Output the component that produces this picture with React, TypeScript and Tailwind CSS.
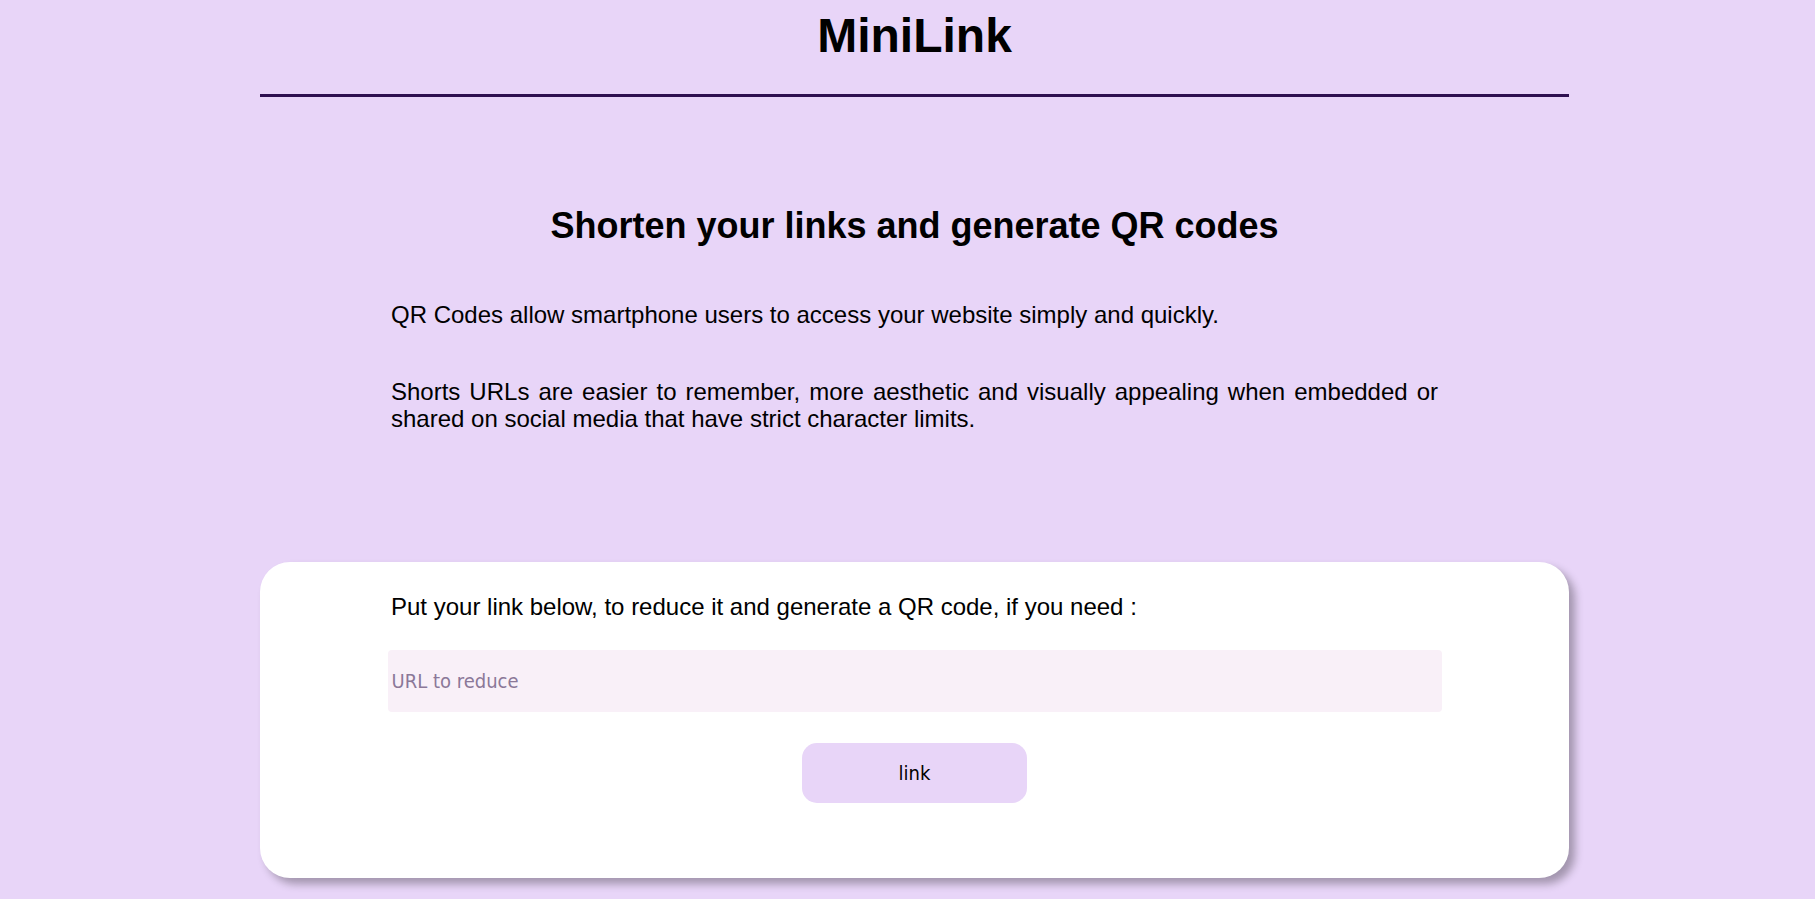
import React from "react";

export default function App() {
  return (
    <div className="min-h-screen bg-[#e8d5f8] font-['Liberation_Sans',Arial,sans-serif] text-black">
      <div className="ml-[260px] w-[1309px] pb-[20px]">
        <h1 className="pt-[8px] text-center text-[48px] leading-[56px] font-bold">MiniLink</h1>
        <div className="mt-[30px] h-[3px] bg-[#2e1050]" />
        <h2 className="mt-[108px] text-center text-[36px] leading-[42px] font-bold">
          Shorten your links and generate QR codes
        </h2>
        <div className="px-[131px] text-[24px] leading-[27.6px] text-justify">
          <p className="mt-[54px]">QR Codes allow smartphone users to access your website simply and quickly.</p>
          <p className="mt-[49px]">
            Shorts URLs are easier to remember, more aesthetic and visually appealing when embedded or shared on
            social media that have strict character limits.
          </p>
        </div>
        <div className="mt-[129px] rounded-[30px] bg-white pt-[31px] pb-[75px] shadow-[6px_6px_8px_rgba(0,0,0,0.3)]">
          <p className="px-[131px] text-[24px] leading-[27.6px]">
            Put your link below, to reduce it and generate a QR code, if you need :
          </p>
          <input
            type="text"
            placeholder="URL to reduce"
            className="mx-auto mt-[30px] block h-[62px] w-[1054px] rounded-[4px] bg-[#f9f0f8] pl-[4px] font-['DejaVu_Sans_Condensed','Noto_Sans',sans-serif] text-[20px] text-black outline-none placeholder:text-[#8b7898]"
          />
          <button
            type="button"
            className="mx-auto mt-[31px] block h-[60px] w-[225px] rounded-[15px] bg-[#e8d5f8] font-['DejaVu_Sans_Condensed','Noto_Sans',sans-serif] text-[20px] text-black"
          >
            link
          </button>
        </div>
      </div>
    </div>
  );
}
